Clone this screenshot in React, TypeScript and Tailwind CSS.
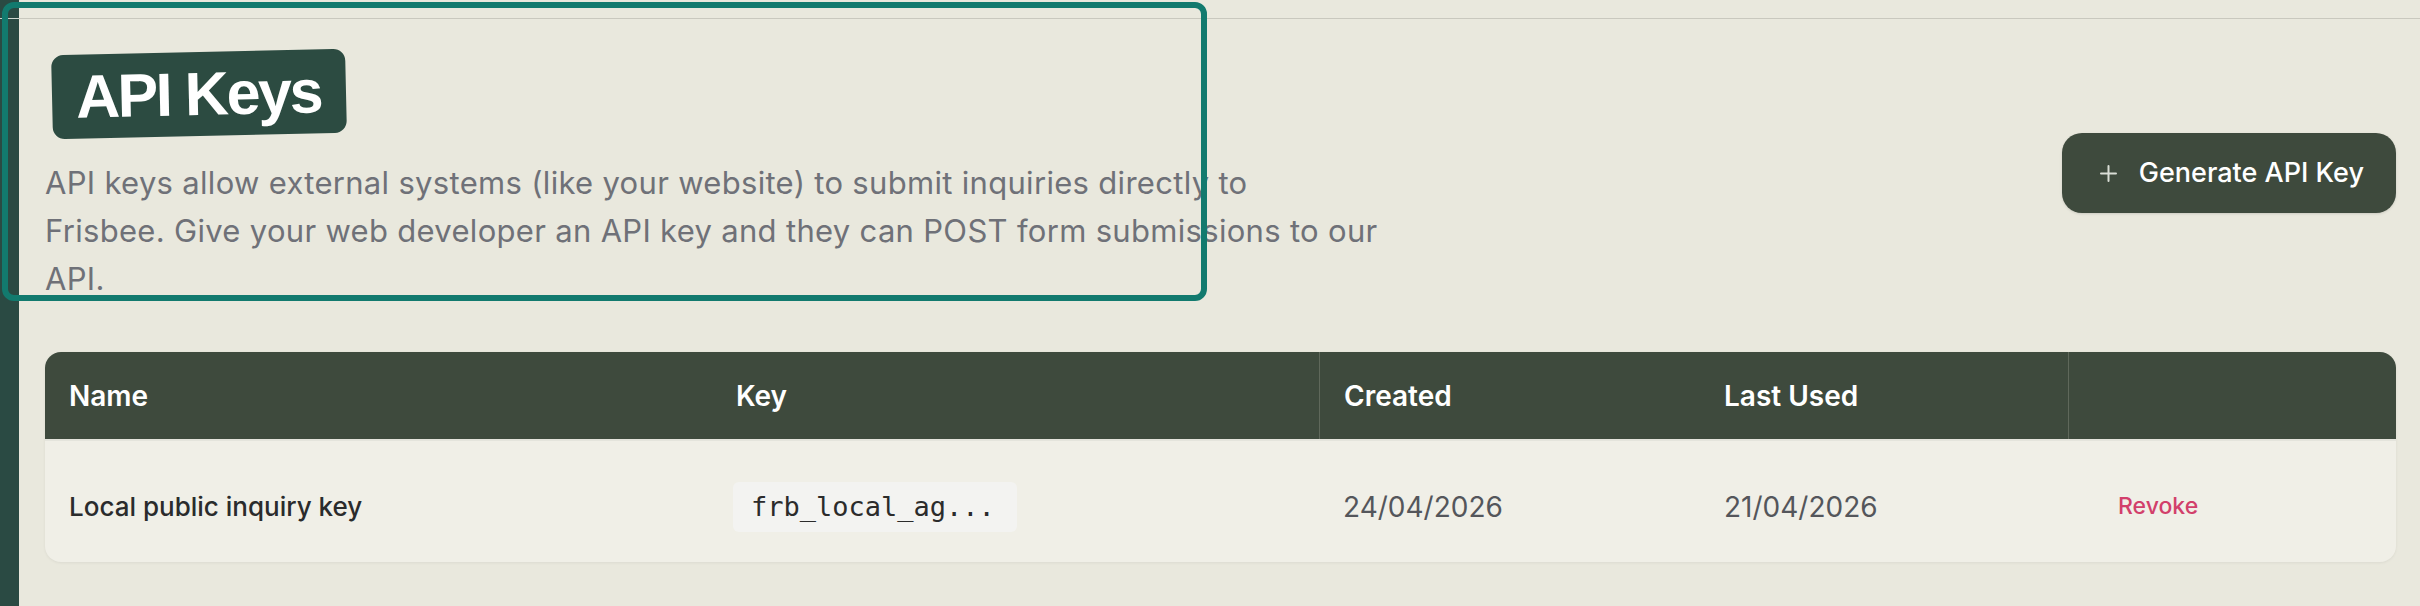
import React from 'react';

const COLS = 'grid grid-cols-[667px_607px_381px_368px_1fr]';

const KEYS = [
  { name: 'Local public inquiry key', key: 'frb_local_ag...', created: '24/04/2026', lastUsed: '21/04/2026' },
];

const PlusIcon = () => (
  <svg width="19" height="19" viewBox="0 0 19 19" fill="none" stroke="currentColor" strokeWidth="2" strokeLinecap="round">
    <path d="M9.5 2v15M2 9.5h15" />
  </svg>
);

export default function App() {
  return (
    <div className="relative flex w-full h-[606px] overflow-hidden bg-[#e9e8dd] font-['Inter',sans-serif]">
      {/* sidebar edge */}
      <div className="w-[19px] shrink-0 bg-[#2a4a43]">
        <div className="h-[19px] border-b border-[#cdd6cf]" />
      </div>

      <main className="flex-1 flex flex-col">
        <div className="h-[19px] shrink-0 border-b border-[#c9c8be]" />

        <div className="pl-[26px] pr-[24px]">
          {/* header */}
          <div className="flex justify-between">
            <div className="pt-[33px]">
              <h1 className="inline-block ml-[7px] -rotate-[1.3deg] rounded-[12px] bg-[#2c4b41] pl-[24px] pr-[25px] h-[84px] leading-[84px] text-white text-[61px] font-bold tracking-[-0.04em] font-['Liberation_Sans',sans-serif]">
                API Keys
              </h1>
              <p className="mt-[23px] text-[31px] leading-[48px] tracking-[0.01em] text-[#6f7178]">
                API keys allow external systems (like your website) to submit inquiries directly to
                <br />
                Frisbee. Give your web developer an API key and they can POST form submissions to our
                <br />
                API.
              </p>
            </div>
            <button className="mt-[114px] self-start flex items-center gap-[21px] h-[80px] rounded-[20px] bg-[#3e4a3d] pl-[37px] pr-[32px] text-[27px] font-medium text-white shadow-sm">
              <span className="text-[#d9ddd6]">
                <PlusIcon />
              </span>
              Generate API Key
            </button>
          </div>

          {/* table */}
          <div className="mt-[49px] rounded-[16px] overflow-hidden bg-[#f0efe7] shadow-[0_1px_3px_rgba(0,0,0,0.06)]">
            <div className={`${COLS} h-[89px] items-stretch bg-[#3e4a3d] text-white text-[28px] font-semibold border-b-2 border-[#e4e4dc]`}>
              <div className="flex items-center pl-[24px]">Name</div>
              <div className="flex items-center pl-[24px]">Key</div>
              <div className="flex items-center pl-[24px] border-l border-[#5f685b]">Created</div>
              <div className="flex items-center pl-[24px]">Last Used</div>
              <div className="border-l border-[#5f685b]" />
            </div>
            {KEYS.map((k) => (
              <div key={k.key} className={`${COLS} h-[121px] pt-[10px] items-center`}>
                <div className="pl-[24px] text-[26px] font-medium text-[#2a2b2c]">{k.name}</div>
                <div className="pl-[21px]">
                  <span className="inline-block rounded-[6px] bg-[#f3f3f1] pl-[18px] pr-[22px] py-[8px] text-[27px] leading-[34px] text-[#2b2b2b] font-['DejaVu_Sans_Mono',monospace]">
                    {k.key}
                  </span>
                </div>
                <div className="pl-[24px] text-[28px] text-[#54565b]">{k.created}</div>
                <div className="pl-[24px] text-[28px] text-[#54565b]">{k.lastUsed}</div>
                <div className="pl-[50px]">
                  <button className="text-[23px] font-medium text-[#d23f6b]">Revoke</button>
                </div>
              </div>
            ))}
          </div>
        </div>
      </main>

      {/* highlight overlay */}
      <div className="pointer-events-none absolute left-[2px] top-[2px] w-[1205px] h-[299px] rounded-[12px] border-[6px] border-[#127a6e]" />
    </div>
  );
}
